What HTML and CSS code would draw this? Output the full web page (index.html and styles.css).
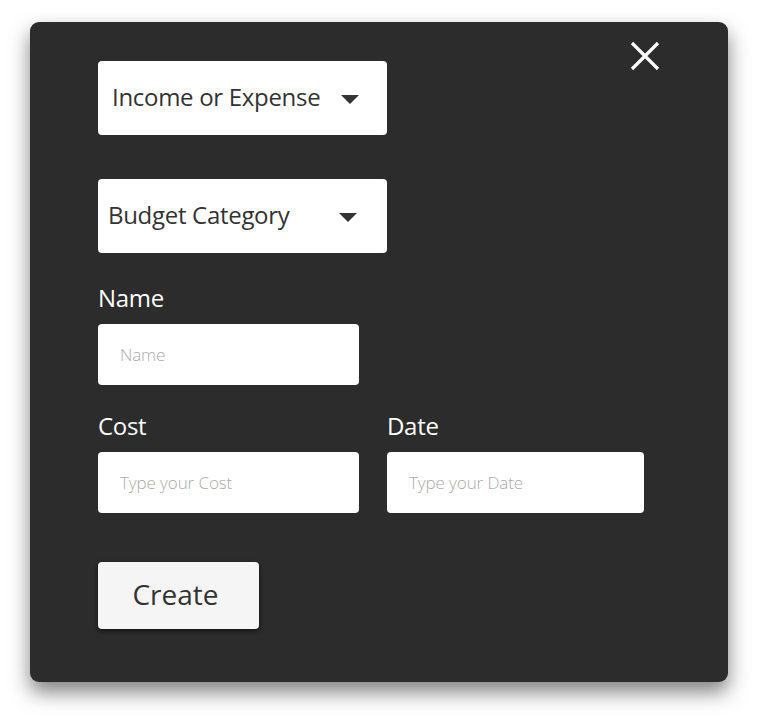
FILE: index.html
```html
<!DOCTYPE html>
<html lang="en">
<head>
<meta charset="utf-8">
<title>New Entry</title>
<link rel="stylesheet" href="styles.css">
</head>
<body>
<div class="modal">
  <button class="close" aria-label="Close">
    <svg width="30" height="30" viewBox="0 0 30 30"><path d="M2 2 L28 28 M28 2 L2 28" stroke="#fff" stroke-width="3.2" stroke-linecap="butt"/></svg>
  </button>
  <div class="select first"><span>Income or Expense</span><span class="caret"></span></div>
  <div class="select second"><span>Budget Category</span><span class="caret"></span></div>
  <label class="label name-label">Name</label>
  <div class="input name-input"><span class="ph">Name</span></div>
  <div class="row">
    <div class="field cost">
      <label class="label">Cost</label>
      <div class="input"><span class="ph">Type your Cost</span></div>
    </div>
    <div class="field date">
      <label class="label">Date</label>
      <div class="input"><span class="ph">Type your Date</span></div>
    </div>
  </div>
  <button class="create">Create</button>
</div>
</body>
</html>
```
FILE: styles.css
```css
html, body { margin: 0; padding: 0; background: #fff; }
body { font-family: "Open Sans", "Noto Sans", sans-serif; padding-bottom: 38px; }
.modal {
  position: relative;
  box-sizing: border-box;
  margin: 22px 0 0 30px;
  width: 698px;
  height: 660px;
  background: #2c2c2c;
  border-radius: 9px;
  box-shadow: 0 10px 20px rgba(0,0,0,0.5);
  padding: 39px 0 0 68px;
  display: flex;
  flex-direction: column;
  align-items: flex-start;
}
.close {
  position: absolute;
  top: 19px;
  right: 68px;
  width: 30px;
  height: 30px;
  padding: 0;
  border: 0;
  background: transparent;
  display: block;
}
.close svg { display: block; }
.select {
  box-sizing: border-box;
  width: 289px;
  height: 74px;
  background: #fff;
  border-radius: 4px;
  display: flex;
  align-items: center;
  color: #333;
  font-size: 24px;
  letter-spacing: -0.3px;
  padding-bottom: 4px;
}
.select.first { padding-left: 14px; }
.select.second { padding-left: 10px; margin-top: 44px; }
.select span:first-child { flex: 1; }
.caret {
  width: 0; height: 0;
  border-left: 9px solid transparent;
  border-right: 9px solid transparent;
  border-top: 9px solid #333;
}
.select.first .caret { margin-right: 28px; margin-top: 6px; }
.select.second .caret { margin-right: 30px; margin-top: 6px; }
.label {
  display: block;
  color: #fff;
  font-size: 24px;
  line-height: 30px;
  letter-spacing: -0.3px;
  height: 30px;
}
.name-label { margin-top: 30px; margin-bottom: 11px; }
.input {
  box-sizing: border-box;
  width: 261px;
  height: 61px;
  background: #fff;
  border-radius: 4px;
  display: flex;
  align-items: center;
  padding-left: 22px;
}
.ph {
  color: #ababab;
  font-size: 17px;
  font-weight: 300;
  letter-spacing: -0.1px;
}
.row {
  display: flex;
  gap: 28px;
  margin-top: 26px;
}
.field .label { margin-bottom: 11px; }
.date .input { width: 257px; }
.create {
  margin-top: 49px;
  width: 161px;
  height: 67px;
  border: 0;
  border-radius: 4px;
  background: #f5f5f5;
  color: #333;
  font-family: "Open Sans", "Noto Sans", sans-serif;
  font-size: 28px;
  box-shadow: 0 2px 5px rgba(0,0,0,0.6);
  padding: 0 6px 3px 0;
}
```
